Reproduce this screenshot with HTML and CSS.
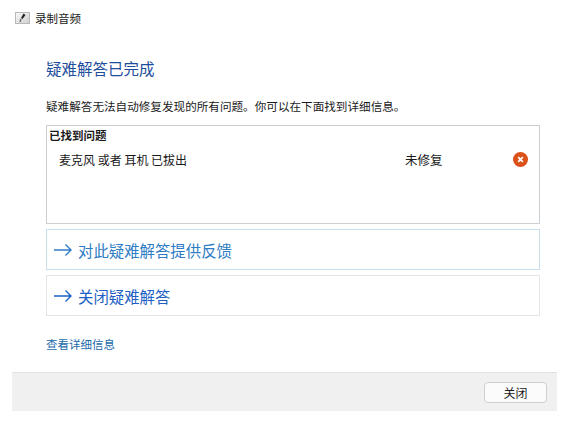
FILE: index.html
```html
<html>
<head>
<meta charset="utf-8">
<title>录制音频</title>
<link rel="stylesheet" href="styles.css">
</head>
<body>
  <div class="caption">
    <svg class="app-icon" width="15" height="12" viewBox="0 0 15 12">
      <defs>
        <linearGradient id="tile" x1="0" y1="0" x2="1" y2="1">
          <stop offset="0" stop-color="#fafafa"/>
          <stop offset="1" stop-color="#cfcfcf"/>
        </linearGradient>
      </defs>
      <rect x="0.5" y="0.5" width="14" height="11" fill="url(#tile)" stroke="#b9b9b9"/>
      <path d="M8.5 1.5 L10.5 3 L7.5 7 L6 6 Z" fill="#222"/>
      <path d="M6 7 L5 10" stroke="#666" stroke-width="1.3" fill="none"/>
    </svg>
    <span>录制音频</span>
  </div>

  <div class="content">
    <h1 class="title">疑难解答已完成</h1>
    <p class="intro">疑难解答无法自动修复发现的所有问题。你可以在下面找到详细信息。</p>

    <div class="problems">
      <div class="problems-head">已找到问题</div>
      <div class="problem">
        <span class="problem-name">麦克风 或者 耳机 已拔出</span>
        <span class="problem-state">未修复</span>
        <svg class="state-icon" width="15" height="15" viewBox="0 0 16 16">
          <circle cx="8" cy="8" r="8" fill="#dc5119"/>
          <path d="M5.5 5.5 L10.5 10.5 M10.5 5.5 L5.5 10.5" stroke="#fff" stroke-width="2"/>
        </svg>
      </div>
    </div>

    <a class="command command-first">
      <svg class="arrow" width="18" height="14" viewBox="0 0 18 14">
        <path d="M0 7 H17 M11.5 1.5 L17 7 L11.5 12.5" stroke="currentColor" stroke-width="1.4" fill="none"/>
      </svg>
      <span>对此疑难解答提供反馈</span>
    </a>
    <a class="command">
      <svg class="arrow" width="18" height="14" viewBox="0 0 18 14">
        <path d="M0 7 H17 M11.5 1.5 L17 7 L11.5 12.5" stroke="currentColor" stroke-width="1.4" fill="none"/>
      </svg>
      <span>关闭疑难解答</span>
    </a>

    <a class="details">查看详细信息</a>
  </div>

  <div class="footer">
    <button class="close">关闭</button>
  </div>
</body>
</html>
```

FILE: styles.css
```css
html, body
{
  margin: 0;
  padding: 0;
  background: #ffffff;
}

body
{
  width: 562px;
  height: 426px;
  overflow: hidden;
  font-family: "Noto Sans CJK SC", "Liberation Sans", sans-serif;
  font-size: 11.5px;
  color: #1a1a1a;
}

.caption
{
  display: flex;
  align-items: center;
  gap: 5px;
  height: 14px;
  padding: 11px 0 0 15px;
}

.app-icon { flex: none; }

.content
{
  padding: 0 22px 0 46px;
}

.title
{
  margin: 0;
  padding-top: 32px;
  height: 23px;
  line-height: 23px;
  font-size: 15.5px;
  font-weight: normal;
  color: #1f4e9c;
}

.intro
{
  margin: 0;
  padding-top: 18px;
  height: 16px;
  line-height: 16px;
  font-size: 11.6px;
}

.problems
{
  margin-top: 11px;
  height: 97px;
  border: 1px solid #c9cfd2;
}

.problems-head
{
  padding: 2px 0 0 2px;
  height: 15px;
  line-height: 15px;
  font-weight: bold;
}

.problem
{
  display: flex;
  align-items: center;
  padding: 8px 0 0 12px;
  height: 16px;
  font-size: 12px;
}

.problem-name { width: 346px; }
.problem-state { width: 108px; font-size: 12.5px; }

.command
{
  display: flex;
  align-items: center;
  gap: 6px;
  height: 39px;
  margin-top: 5px;
  padding-left: 7px;
  border: 1px solid #e3e6e8;
  font-size: 15.4px;
  color: #1d5fc4;
}

.command span { padding-top: 1px; }

.command-first
{
  border-color: #c9dfee;
  color: #2e7cc4;
}

.arrow { flex: none; }

.details
{
  display: block;
  margin-top: 20px;
  height: 16px;
  line-height: 16px;
  color: #1c6aa8;
}

.footer
{
  display: flex;
  align-items: center;
  justify-content: flex-end;
  box-sizing: border-box;
  margin: 20px 5px 0 12px;
  height: 39px;
  padding-right: 10px;
  background: #f0f0f0;
  border-top: 1px solid #e2e2e2;
}

.close
{
  width: 63px;
  height: 21px;
  padding: 0;
  background: #fbfbfb;
  border: 1px solid #cfcfcf;
  border-radius: 4px;
  font-family: inherit;
  font-size: 12px;
  color: #1a1a1a;
}
```
